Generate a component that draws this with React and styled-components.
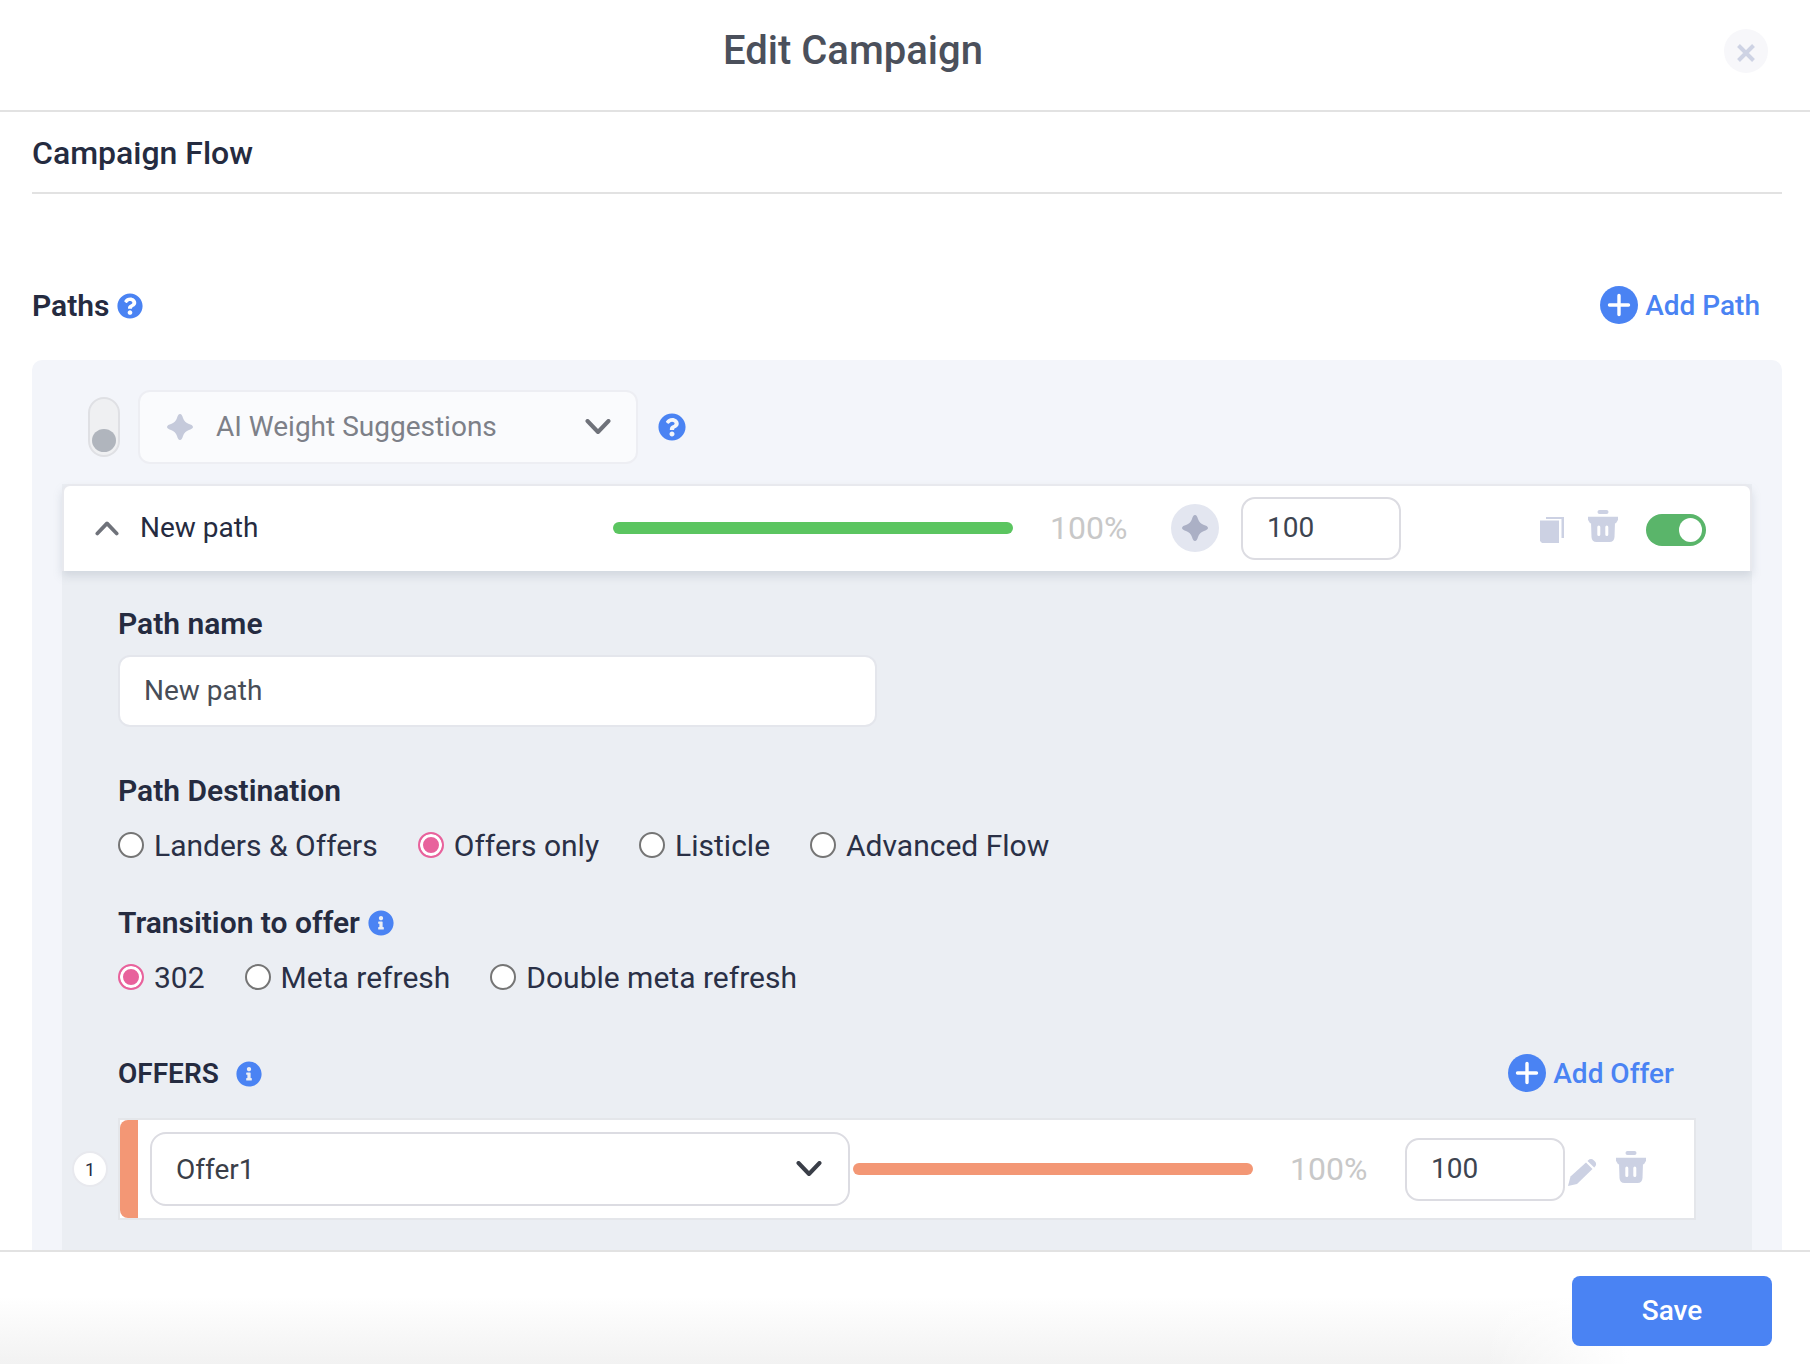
import React from 'react';
import styled, { createGlobalStyle } from 'styled-components';
import { FaQuestionCircle, FaInfoCircle } from 'react-icons/fa';

const GlobalStyle = createGlobalStyle`
  html, body {
    margin: 0;
    padding: 0;
    background: #fff;
  }
  * { box-sizing: border-box; }
  body {
    font-family: Roboto, "Liberation Sans", sans-serif;
    color: #252b40;
  }
`;

const Page = styled.div`
  width: 1810px;
  height: 1364px;
  display: flex;
  flex-direction: column;
  overflow: hidden;
  background: #fff;
`;

const Header = styled.header`
  height: 112px;
  flex: none;
  display: flex;
  align-items: center;
  justify-content: center;
  position: relative;
  border-bottom: 2px solid #e2e2e2;
  padding: 0 104px 10px 0;
`;

const Title = styled.h1`
  margin: 0;
  font-size: 40px;
  font-weight: 500;
  color: #4b505b;
`;

const CloseButton = styled.button`
  position: absolute;
  left: 1724px;
  top: 29px;
  width: 44px;
  height: 44px;
  padding: 4px 0 0;
  border: 0;
  border-radius: 50%;
  background: #f7f7fa;
  display: flex;
  align-items: center;
  justify-content: center;
`;

const Content = styled.main`
  flex: 1;
  min-height: 0;
  overflow: hidden;
  padding: 0 28px 0 32px;
`;

const SectionTitle = styled.div`
  height: 82px;
  display: flex;
  align-items: center;
  padding-top: 1px;
  font-size: 32px;
  font-weight: 500;
  border-bottom: 2px solid #e2e2e2;
`;

const PathsHeader = styled.div`
  height: 38px;
  margin-top: 92px;
  padding-right: 22px;
  display: flex;
  align-items: center;
  justify-content: space-between;
`;

const Heading = styled.div`
  display: flex;
  align-items: center;
  gap: ${p => p.$gap || 8}px;
  padding-top: ${p => p.$drop || 0}px;
  font-size: ${p => p.$size || 30}px;
  line-height: 34px;
  font-weight: 600;
`;

const HelpIcon = styled(FaQuestionCircle)`
  width: ${p => p.$size || 26}px;
  height: ${p => p.$size || 26}px;
  color: #4a83f3;
  flex: none;
`;

const InfoIcon = styled(FaInfoCircle)`
  width: 26px;
  height: 26px;
  color: #4a83f3;
  flex: none;
`;

const AddLink = styled.a`
  display: flex;
  align-items: center;
  gap: 7px;
  font-size: 28px;
  font-weight: 500;
  color: #4a83f3;
`;

const Panel = styled.section`
  margin-top: 36px;
  border-radius: 10px 10px 0 0;
  background: #f3f5fa;
  padding: 31px 30px 0 30px;
`;

const AiBar = styled.div`
  display: flex;
  align-items: center;
  height: 72px;
  padding-left: 26px;
`;

const VerticalToggle = styled.div`
  width: 32px;
  height: 60px;
  flex: none;
  border: 2px solid #dfe0e4;
  border-radius: 16px;
  background: #eff0f2;
  display: flex;
  flex-direction: column;
  justify-content: flex-end;
  align-items: center;
  padding-bottom: 3px;
`;

const VerticalKnob = styled.span`
  width: 24px;
  height: 23px;
  border-radius: 50%;
  background: #b0b5bd;
`;

const AiSelect = styled.div`
  width: 500px;
  height: 74px;
  flex: none;
  margin: 0 20px 0 18px;
  padding: 0 25px 0 27px;
  display: flex;
  align-items: center;
  gap: 23px;
  border: 2px solid #edeef3;
  border-radius: 12px;
  background: #fafbfd;
  font-size: 28px;
  color: #7d8088;
`;

const AiLabel = styled.span`
  flex: 1;
  padding-bottom: 2px;
`;

const PathCard = styled.div`
  margin-top: 21px;
  background: #ebeef3;
`;

const PathHeader = styled.div`
  height: 87px;
  padding: 0 0 1px 31px;
  display: flex;
  align-items: center;
  background: #fff;
  border: 2px solid #e8e9ee;
  border-width: 2px 2px 0 2px;
  border-radius: 8px 8px 0 0;
  box-shadow: 0 5px 10px rgba(120, 130, 150, 0.22);
  position: relative;
`;

const PathName = styled.div`
  width: 473px;
  margin-left: 21px;
  padding-bottom: 2px;
  font-size: 28px;
`;

const Track = styled.div`
  width: 400px;
  height: 12px;
  flex: none;
  border-radius: 6px;
  background: ${p => p.$color};
`;

const Percent = styled.div`
  width: ${p => p.$width}px;
  margin-left: ${p => p.$offset}px;
  flex: none;
  font-size: 32px;
  color: #c8c8c8;
`;

const StarCircle = styled.div`
  width: 48px;
  height: 48px;
  flex: none;
  margin-right: 22px;
  border-radius: 50%;
  background: #e3e6f0;
  display: flex;
  align-items: center;
  justify-content: center;
`;

const Weight = styled.div`
  width: 160px;
  height: 63px;
  flex: none;
  padding: 0 0 2px 24px;
  display: flex;
  align-items: center;
  background: #fff;
  border: 2px solid #dcdce2;
  border-radius: 14px;
  font-size: 28px;
  color: #3d4450;
`;

const RowActions = styled.div`
  display: flex;
  align-items: center;
  margin: 3px 0 0 139px;
  gap: 24px;
`;

const ShiftedIcon = styled.span`
  display: flex;
  margin-bottom: ${p => p.$by}px;
`;

const GreenToggle = styled.div`
  width: 60px;
  height: 32px;
  margin-left: 4px;
  padding: 0 4px;
  display: flex;
  align-items: center;
  justify-content: flex-end;
  border-radius: 16px;
  background: #5ab56a;
`;

const GreenKnob = styled.span`
  width: 23px;
  height: 24px;
  border-radius: 50%;
  background: #fff;
`;

const PathBody = styled.div`
  padding: 36px 56px 40px 56px;
`;

const Field = styled.div`
  margin-top: ${p => p.$top || 0}px;
`;

const TextBox = styled.div`
  width: 759px;
  height: 72px;
  margin-top: 14px;
  padding: 0 0 2px 24px;
  display: flex;
  align-items: center;
  background: #fff;
  border: 2px solid #e4e6ec;
  border-radius: 12px;
  font-size: 28px;
  color: #474d57;
`;

const RadioGroup = styled.div`
  display: flex;
  margin-top: 20px;
  height: 34px;
`;

const RadioLabel = styled.label`
  display: flex;
  align-items: center;
  gap: 10px;
  margin-right: ${p => p.$gap}px;
  padding-top: 2px;
  font-size: 30px;
  line-height: 34px;
  color: #2a3046;
`;

const RadioDot = styled.span`
  width: 26px;
  height: 26px;
  flex: none;
  margin-top: -2px;
  border-radius: 50%;
  border: 2px solid ${p => (p.$checked ? '#e8629c' : '#757575')};
  background: ${p => (p.$checked ? '#e8629c' : '#fff')};
  box-shadow: ${p => (p.$checked ? 'inset 0 0 0 3px #fff' : 'none')};
`;

const OffersHeader = styled.div`
  height: 38px;
  margin-top: 60px;
  padding-right: 22px;
  display: flex;
  align-items: center;
  justify-content: space-between;
`;

const OfferRow = styled.div`
  position: relative;
  height: 102px;
  margin-top: 26px;
  display: flex;
  align-items: center;
  background: #fff;
  border: 2px solid #e4e6ea;
`;

const OfferIndex = styled.span`
  position: absolute;
  left: -48px;
  top: 31px;
  width: 36px;
  height: 36px;
  display: flex;
  align-items: center;
  justify-content: center;
  border: 2px solid #e8e9ee;
  border-radius: 50%;
  background: #fff;
  font-size: 18px;
`;

const Stripe = styled.span`
  width: 18px;
  align-self: stretch;
  flex: none;
  margin-right: 12px;
  border-radius: 8px 0 0 8px;
  background: #f39775;
`;

const OfferSelect = styled.div`
  width: 700px;
  height: 74px;
  flex: none;
  margin-right: 3px;
  padding: 0 26px 0 24px;
  display: flex;
  align-items: center;
  justify-content: space-between;
  border: 2px solid #dcdce2;
  border-radius: 16px;
  font-size: 28px;
  color: #3a3e48;
`;

const OfferActions = styled.div`
  display: flex;
  align-items: center;
  margin-left: 3px;
  gap: 19px;
`;

const Footer = styled.footer`
  height: 114px;
  flex: none;
  padding: 24px 38px 0 0;
  display: flex;
  justify-content: flex-end;
  align-items: flex-start;
  border-top: 2px solid #e2e2e2;
  background:
    linear-gradient(to right, rgba(255, 255, 255, 0) 82%, #fff 90%),
    linear-gradient(to bottom, #fff 40%, #f2f2f2 100%);
`;

const SaveButton = styled.button`
  width: 200px;
  height: 70px;
  padding: 0 0 2px;
  border: 0;
  border-radius: 8px;
  background: #4a83f3;
  color: #fff;
  font-family: inherit;
  font-size: 28px;
  font-weight: 500;
`;

const Chevron = ({ up, color = '#6f727a', width = 26 }) => (
  <svg width={width} height="16" viewBox="0 0 26 16" fill="none">
    <path
      d={up ? 'M2.5 14 13 3l10.5 11' : 'M2.5 2 13 13 23.5 2'}
      stroke={color}
      strokeWidth="4"
      strokeLinecap="round"
      strokeLinejoin="round"
    />
  </svg>
);

const Sparkle = ({ size = 26, color = '#c5cadb' }) => (
  <svg width={size} height={size} viewBox="0 0 26 26">
    <path
      d="M13 0c1.600 0 2.400 2.200 3 4c.9 2.900 3.100 5.100 6 6c1.800 .6 4 1.400 4 3c0 1.600-2.200 2.400-4 3c-2.900 .9-5.100 3.100-6 6c-.6 1.800-1.400 4-3 4c-1.600 0-2.400-2.200-3-4c-.9-2.900-3.100-5.100-6-6c-1.800-.6-4-1.400-4-3c0-1.600 2.200-2.400 4-3c2.900-.9 5.100-3.100 6-6c.6-1.800 1.400-4 3-4Z"
      fill={color}
    />
  </svg>
);

const PlusCircle = () => (
  <svg width="38" height="38" viewBox="0 0 38 38">
    <circle cx="19" cy="19" r="19" fill="#4a83f3" />
    <path d="M19 9.500v19M9.500 19h19" stroke="#fff" strokeWidth="3.400" strokeLinecap="round" />
  </svg>
);

const CopyIcon = () => (
  <svg width="24" height="26" viewBox="0 0 24 26">
    <path d="M0 3.500h19V26H2l-2-2Z" fill="#ccd1e3" />
    <path d="M6 0h18v21h-2.500V2H6Z" fill="#ccd1e3" />
  </svg>
);

const TrashIcon = () => (
  <svg width="30" height="32" viewBox="0 0 30 32">
    <rect x="9.500" y="0" width="11" height="4" rx="2" fill="#ccd1e3" />
    <path d="M0 6.700h30v3l-2 3.600H2l-2-3.600Z" fill="#ccd1e3" />
    <path
      fillRule="evenodd"
      d="M3 12h24l-.5 15c-.1 3-2 5-5 5h-13c-3 0-4.900-2-5-5Zm6.300 5v7.500a1.500 1.500 0 0 0 3 0V17a1.500 1.500 0 0 0-3 0Zm8 0v7.500a1.500 1.500 0 0 0 3 0V17a1.500 1.500 0 0 0-3 0Z"
      fill="#ccd1e3"
    />
  </svg>
);

const PencilIcon = () => (
  <svg width="29" height="28" viewBox="0 0 29 28">
    <path d="M0 28l2.500-9.500L18 4.500l6.500 6.500L9 26Z" fill="#ccd1e3" />
    <path d="M20 2.400c1.800-1.800 4-1.900 5.700-.2l1.300 1.300c1.600 1.600 1.500 3.800-.3 5.500l-.5.500-6.700-6.600Z" fill="#ccd1e3" />
  </svg>
);

const CloseIcon = () => (
  <svg width="20" height="20" viewBox="0 0 20 20">
    <path d="M2.500 2.500l15 15M17.500 2.500l-15 15" stroke="#ced3e4" strokeWidth="4" />
  </svg>
);

const Radio = ({ label, checked, gap }) => (
  <RadioLabel $gap={gap}>
    <RadioDot $checked={checked} />
    {label}
  </RadioLabel>
);

const destinations = [
  { label: 'Landers & Offers', gap: 40 },
  { label: 'Offers only', checked: true, gap: 40 },
  { label: 'Listicle', gap: 40 },
  { label: 'Advanced Flow', gap: 0 },
];

const transitions = [
  { label: '302', checked: true, gap: 40 },
  { label: 'Meta refresh', gap: 40 },
  { label: 'Double meta refresh', gap: 0 },
];

export default function App() {
  return (
    <Page>
      <GlobalStyle />
      <Header>
        <Title>Edit Campaign</Title>
        <CloseButton aria-label="Close">
          <CloseIcon />
        </CloseButton>
      </Header>

      <Content>
        <SectionTitle>Campaign Flow</SectionTitle>

        <PathsHeader>
          <Heading $drop={2}>
            Paths <HelpIcon />
          </Heading>
          <AddLink>
            <PlusCircle />
            Add Path
          </AddLink>
        </PathsHeader>

        <Panel>
          <AiBar>
            <VerticalToggle>
              <VerticalKnob />
            </VerticalToggle>
            <AiSelect>
              <Sparkle />
              <AiLabel>AI Weight Suggestions</AiLabel>
              <Chevron />
            </AiSelect>
            <HelpIcon $size={28} />
          </AiBar>

          <PathCard>
            <PathHeader>
              <Chevron up width={24} />
              <PathName>New path</PathName>
              <Track $color="#5bc560" />
              <Percent $width={121} $offset={37}>100%</Percent>
              <StarCircle>
                <Sparkle color="#abb0c5" />
              </StarCircle>
              <Weight>100</Weight>
              <RowActions>
                <CopyIcon />
                <ShiftedIcon $by={7}>
                  <TrashIcon />
                </ShiftedIcon>
                <GreenToggle>
                  <GreenKnob />
                </GreenToggle>
              </RowActions>
            </PathHeader>

            <PathBody>
              <Field>
                <Heading>Path name</Heading>
                <TextBox>New path</TextBox>
              </Field>

              <Field $top={47}>
                <Heading>Path Destination</Heading>
                <RadioGroup>
                  {destinations.map(d => (
                    <Radio key={d.label} {...d} />
                  ))}
                </RadioGroup>
              </Field>

              <Field $top={44}>
                <Heading>
                  Transition to offer <InfoIcon />
                </Heading>
                <RadioGroup>
                  {transitions.map(t => (
                    <Radio key={t.label} {...t} />
                  ))}
                </RadioGroup>
              </Field>

              <OffersHeader>
                <Heading $gap={17} $size={28} $drop={2}>
                  OFFERS <InfoIcon />
                </Heading>
                <AddLink>
                  <PlusCircle />
                  Add Offer
                </AddLink>
              </OffersHeader>

              <OfferRow>
                <OfferIndex>1</OfferIndex>
                <Stripe />
                <OfferSelect>
                  Offer1
                  <Chevron color="#3a3e48" />
                </OfferSelect>
                <Track $color="#f39775" />
                <Percent $width={115} $offset={37}>100%</Percent>
                <Weight>100</Weight>
                <OfferActions>
                  <ShiftedIcon $by={-5}>
                    <PencilIcon />
                  </ShiftedIcon>
                  <ShiftedIcon $by={4}>
                    <TrashIcon />
                  </ShiftedIcon>
                </OfferActions>
              </OfferRow>
            </PathBody>
          </PathCard>
        </Panel>
      </Content>

      <Footer>
        <SaveButton>Save</SaveButton>
      </Footer>
    </Page>
  );
}
